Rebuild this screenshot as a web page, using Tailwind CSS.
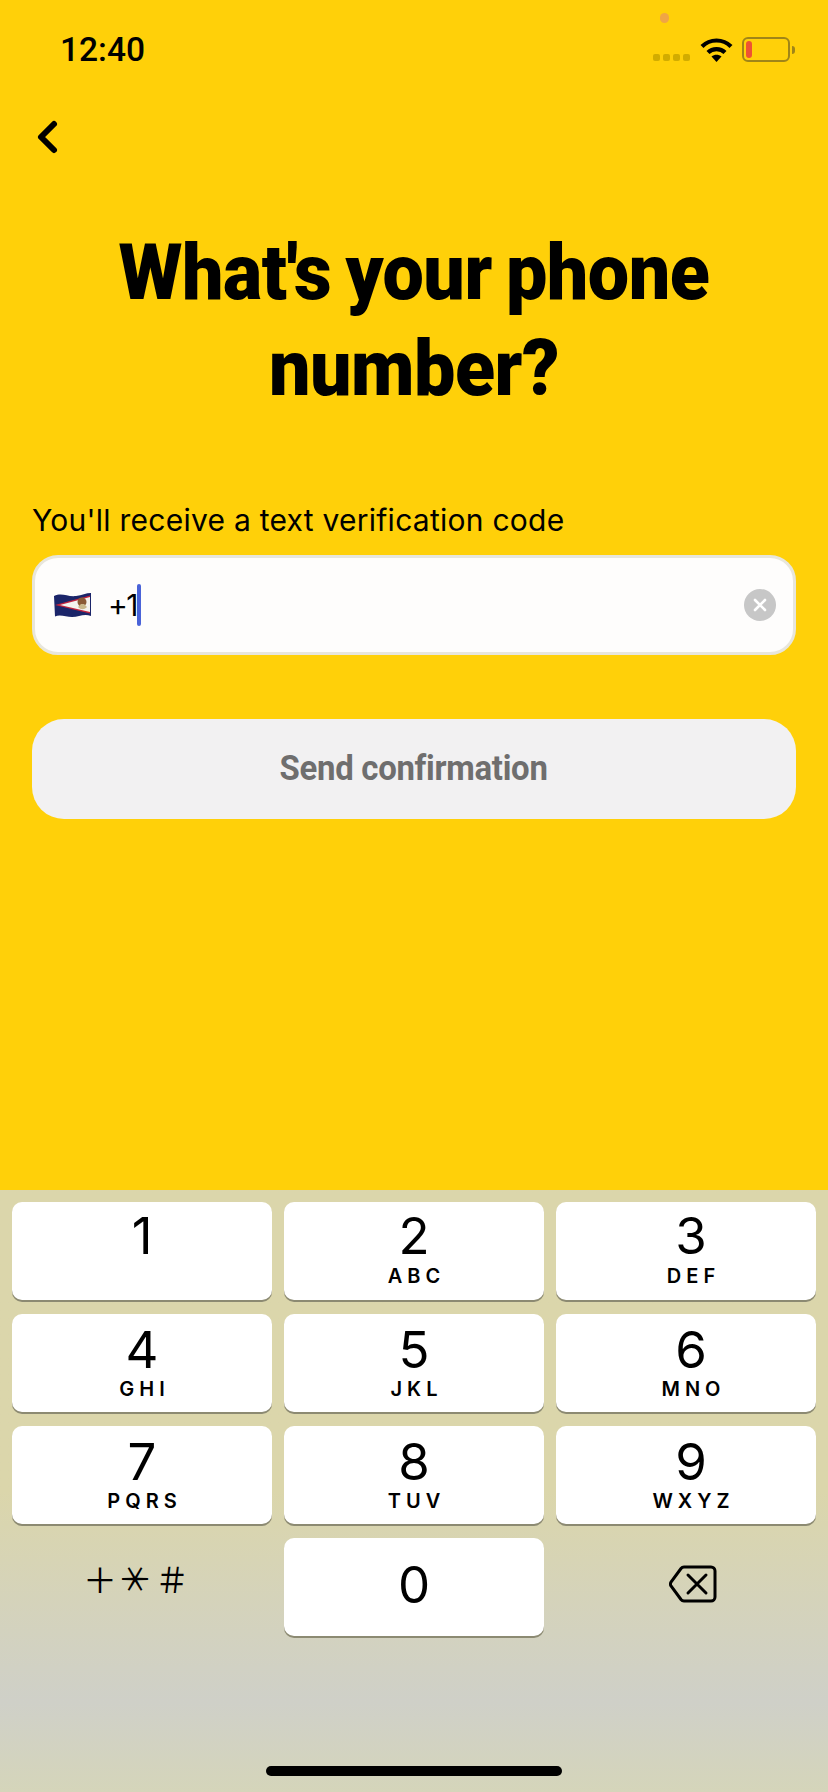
<!DOCTYPE html>
<html><head><meta charset="utf-8"><script src="https://cdn.jsdelivr.net/npm/@tailwindcss/browser@4"></script></head>
<body class="m-0">
<main class="relative w-[828px] h-[1792px] overflow-hidden bg-[#ffd009] flex flex-col font-['Inter',sans-serif] text-black">
  <div class="absolute left-[660px] top-[13px] w-[9px] h-[10px] rounded-full bg-[#f0a545]"></div>
  <header class="h-[100px] flex items-start justify-between pl-[60px] pr-[33px] pt-[31px]">
    <span class="font-['Roboto',sans-serif] text-[33.5px] leading-[38px] font-medium">12:40</span>
    <div class="flex items-start gap-[9px] pt-[6px]">
      <div class="flex gap-[3px] pt-[17px]">
        <i class="w-[7px] h-[7px] rounded-[2px] bg-[#d2ac00]"></i><i class="w-[7px] h-[7px] rounded-[2px] bg-[#d2ac00]"></i><i class="w-[7px] h-[7px] rounded-[2px] bg-[#d2ac00]"></i><i class="w-[7px] h-[7px] rounded-[2px] bg-[#d2ac00]"></i>
      </div>
      <svg width="33" height="25" viewBox="0 0 33 25" class="block ml-[1px]"><path d="M2 9.500C10 1.500 23 1.500 31 9.500" fill="none" stroke="#000" stroke-width="4.200"/><path d="M8 15.500C12.500 11 20.500 11 25 15.500" fill="none" stroke="#000" stroke-width="4.200"/><path d="M11.500 19.500L16.500 25L21.500 19.500C18.500 17 14.500 17 11.500 19.500Z" fill="#000"/></svg>
      <div class="flex items-center">
        <div class="w-[48px] h-[25px] rounded-[6px] border-[2px] border-[#a08518] p-[2px]"><div class="w-[6px] h-full rounded-[3px] bg-[#ee5233]"></div></div>
        <div class="ml-[2px] w-[3px] h-[8px] rounded-r-[3px] bg-[#a08518]"></div>
      </div>
    </div>
  </header>
  <nav class="h-[66px] pl-[35px] pt-[18px]">
    <svg width="26" height="38" viewBox="0 0 26 38" class="block"><path d="M19 6L6 19L19 32" fill="none" stroke="#000" stroke-width="6" stroke-linecap="round" stroke-linejoin="round"/></svg>
  </nav>
  <h1 class="mt-[59px] text-center font-['Roboto',sans-serif] font-black text-[78px] leading-[96px] tracking-[-0.5px] [word-spacing:-4px] scale-x-[0.943]">What's your phone<br>number?</h1>
  <p class="mt-[83px] pl-[32px] font-['Inter',sans-serif] text-[30px] leading-[40px] tracking-[0.25px]">You'll receive a text verification code</p>
  <div class="mx-[32px] mt-[15px] h-[100px] rounded-[26px] border-[3px] border-[#e8e6dc] bg-[#fefdfc] flex items-center pl-[19px] pr-[17px]">
    <svg width="37" height="26" viewBox="0 0 37 26" class="block shrink-0">
      <path d="M0 4C8 0 13 5 22 4C28 3.300 32 1 37 1V24C30 21 25 25 18 25C12 25 6 22 1 24.500Z" fill="#1b2569"/>
      <path d="M1 13L36 3.500V21.500Z" fill="#c1243f"/>
      <path d="M6 13L36 5V20Z" fill="#f4f3ef"/>
      <circle cx="28" cy="10" r="4.500" fill="#8a5a35"/><path d="M24 15C27 18 30 18 33 15L30 12L27 12Z" fill="#c9b78a"/>
    </svg>
    <span class="ml-[17px] font-['Inter',sans-serif] text-[30px] leading-[34px] tracking-[-1.500px]">+1</span>
    <span class="w-[4px] h-[42px] rounded-[2px] bg-[#4a63d8]"></span>
    <div class="ml-auto w-[32px] h-[32px] rounded-full bg-[#c7c7c7] flex items-center justify-center">
      <svg width="14" height="14" viewBox="0 0 14 14"><path d="M2 2L12 12M12 2L2 12" stroke="#fff" stroke-width="2.600" stroke-linecap="round"/></svg>
    </div>
  </div>
  <button class="mx-[32px] mt-[64px] h-[100px] rounded-[32px] bg-[#f2f1f2] text-[#6f6e6e] font-['Roboto',sans-serif] font-bold text-[35px] text-center"><span class="inline-block scale-x-[0.94] tracking-[-0.3px] whitespace-nowrap">Send confirmation</span></button>

  <section class="absolute left-0 top-[1190px] w-[828px] h-[602px] bg-linear-to-b from-[#dbd6ab] from-50% via-[#cfd0c8] via-85% to-[#d5d5ba] px-[12px] pt-[12px]">
    <div class="grid grid-cols-3 gap-x-[12px] gap-y-[14px]">
      <div class="h-[98px] rounded-[10px] bg-white shadow-[0_2px_0_#8c8a72] flex flex-col items-center pt-[9px]"><span class="text-[51px] leading-[50px]">1</span></div>
      <div class="h-[98px] rounded-[10px] bg-white shadow-[0_2px_0_#8c8a72] flex flex-col items-center pt-[9px]"><span class="text-[51px] leading-[50px]">2</span><span class="text-[20px] leading-[24px] font-semibold tracking-[5px] mr-[-5px] mt-[3px]">ABC</span></div>
      <div class="h-[98px] rounded-[10px] bg-white shadow-[0_2px_0_#8c8a72] flex flex-col items-center pt-[9px] pl-[10px]"><span class="text-[51px] leading-[50px]">3</span><span class="text-[20px] leading-[24px] font-semibold tracking-[5px] mr-[-5px] mt-[3px]">DEF</span></div>
      <div class="h-[98px] rounded-[10px] bg-white shadow-[0_2px_0_#8c8a72] flex flex-col items-center pt-[11px]"><span class="text-[51px] leading-[50px]">4</span><span class="text-[20px] leading-[24px] font-semibold tracking-[5px] mr-[-5px] mt-[2px]">GHI</span></div>
      <div class="h-[98px] rounded-[10px] bg-white shadow-[0_2px_0_#8c8a72] flex flex-col items-center pt-[11px]"><span class="text-[51px] leading-[50px]">5</span><span class="text-[20px] leading-[24px] font-semibold tracking-[5px] mr-[-5px] mt-[2px]">JKL</span></div>
      <div class="h-[98px] rounded-[10px] bg-white shadow-[0_2px_0_#8c8a72] flex flex-col items-center pt-[11px] pl-[10px]"><span class="text-[51px] leading-[50px]">6</span><span class="text-[20px] leading-[24px] font-semibold tracking-[5px] mr-[-5px] mt-[2px]">MNO</span></div>
      <div class="h-[98px] rounded-[10px] bg-white shadow-[0_2px_0_#8c8a72] flex flex-col items-center pt-[11px]"><span class="text-[51px] leading-[50px]">7</span><span class="text-[20px] leading-[24px] font-semibold tracking-[5px] mr-[-5px] mt-[2px]">PQRS</span></div>
      <div class="h-[98px] rounded-[10px] bg-white shadow-[0_2px_0_#8c8a72] flex flex-col items-center pt-[11px]"><span class="text-[51px] leading-[50px]">8</span><span class="text-[20px] leading-[24px] font-semibold tracking-[5px] mr-[-5px] mt-[2px]">TUV</span></div>
      <div class="h-[98px] rounded-[10px] bg-white shadow-[0_2px_0_#8c8a72] flex flex-col items-center pt-[11px] pl-[10px]"><span class="text-[51px] leading-[50px]">9</span><span class="text-[20px] leading-[24px] font-semibold tracking-[5px] mr-[-5px] mt-[2px]">WXYZ</span></div>
      <div class="h-[98px] flex items-center justify-center pb-[16px] gap-[2px] font-['Noto_Sans_CJK_JP',sans-serif] font-normal text-[34px] leading-[34px] mr-[12px]"><span class="block w-[34px] h-[34px]">＋</span><span class="block w-[34px] h-[34px] rotate-90">＊</span><span class="block w-[34px] h-[34px]">＃</span></div>
      <div class="h-[98px] rounded-[10px] bg-white shadow-[0_2px_0_#8c8a72] flex items-center justify-center"><span class="text-[51px] leading-[50px] mb-[4px]">0</span></div>
      <div class="h-[98px] flex items-center justify-center pb-[6px] pl-[14px]">
        <svg width="48" height="38" viewBox="0 0 48 38"><path d="M15 2H42A4 4 0 0 1 46 6V32A4 4 0 0 1 42 36H15A4 4 0 0 1 12 34.500L2 21A4 4 0 0 1 2 17L12 3.500A4 4 0 0 1 15 2Z" fill="none" stroke="#000" stroke-width="3"/><path d="M19 10L37 28M37 10L19 28" stroke="#000" stroke-width="3" stroke-linecap="round"/></svg>
      </div>
    </div>
    <div class="absolute left-[266px] top-[576px] w-[296px] h-[10px] rounded-full bg-black"></div>
  </section>
</main>
</body></html>
